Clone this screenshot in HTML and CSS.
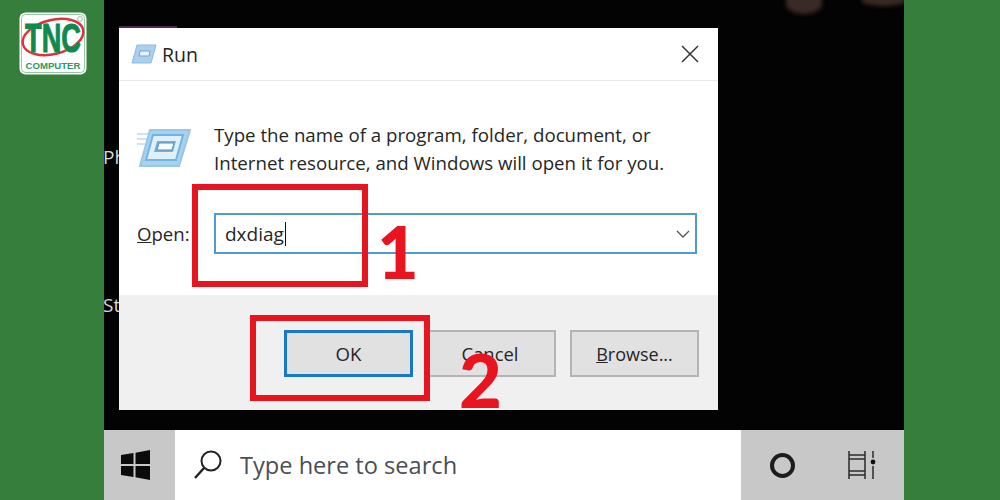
FILE: index.html
```html
<!DOCTYPE html>
<html lang="en">
  <head>
    <meta charset="UTF-8" />
    <title>Run dxdiag</title>
    <link rel="stylesheet" href="styles.css">
  </head>
  <body>
    <div class="logo">
      <svg width="68" height="63" viewBox="0 0 68 63">
        <rect x="0.5" y="0.5" width="67" height="62" rx="6" fill="#fff" />
        <rect x="2.5" y="2.5" width="63" height="58" rx="4" fill="#fff" stroke="#7fb88c" stroke-width="0.8" />
        <ellipse cx="34" cy="25" rx="31" ry="17" transform="rotate(-14 34 25)" fill="none" stroke="#d9343a" stroke-width="2.4" />
        <text class="logo-tnc" transform="translate(34 40) scale(0.68 1)" text-anchor="middle">TNC</text>
        <text class="logo-sub" x="34" y="56.5" text-anchor="middle">COMPUTER</text>
        <circle cx="61" cy="7" r="2.4" fill="none" stroke="#7fb08a" stroke-width="0.8" />
      </svg>
    </div>

    <div class="stage">
      <div class="desktop">
        <div class="tree tree-a"></div>
        <div class="tree tree-b"></div>
        <div class="window-edge"></div>
        <span class="desk-label label-ph">Ph</span>
        <span class="desk-label label-st">St</span>

        <div class="dialog">
          <div class="titlebar">
            <svg class="run-small" width="26" height="20" viewBox="0 0 26 20">
              <path d="M6 1 H25 L20 19 H1 Z" fill="#a9d0ec" stroke="#8dbbdd" />
              <path d="M9 7 H19 L18 12 H8 Z" fill="#e8f3fb" stroke="#6ea5cf" />
            </svg>
            <span class="title">Run</span>
            <svg class="close" width="18" height="18" viewBox="0 0 18 18">
              <path d="M1 1 L17 17 M17 1 L1 17" stroke="#333" stroke-width="1.5" fill="none" />
            </svg>
          </div>

          <div class="content">
            <div class="intro">
              <svg class="run-icon" width="54" height="38" viewBox="0 0 54 38">
                <path d="M0 5 H12 M0 10 H10 M0 15 H8" stroke="#cfe2f0" stroke-width="2" />
                <path d="M13 1 H53 L42 37 H3 Z" fill="#a5d2f0" stroke="#9cc6e4" stroke-width="2" />
                <path d="M16 6 H46 L39 31 H9 Z" fill="#dff0fb" stroke="#74b4e2" stroke-width="2" />
                <path d="M20 12 H39 L36 23 H17 Z" fill="#6fb3e6" />
                <path d="M22 14 H37 L35 21 H20 Z" fill="#f6fbfe" stroke="#6a8ba5" />
              </svg>
              <p class="message">Type the name of a program, folder, document, or<br>Internet resource, and Windows will open it for you.</p>
            </div>
            <div class="open-row">
              <label class="open-label"><u>O</u>pen:</label>
              <div class="combo">
                <span class="combo-value">dxdiag</span><span class="caret"></span>
                <svg class="chevron" width="14" height="8" viewBox="0 0 14 8">
                  <path d="M1 1 L7 7 L13 1" stroke="#555" stroke-width="1.3" fill="none" />
                </svg>
              </div>
            </div>
          </div>

          <div class="actions">
            <button class="btn btn-default">OK</button>
            <button class="btn btn-cancel">Cancel</button>
            <button class="btn btn-browse"><u>B</u>rowse...</button>
          </div>
          <span class="step step-two">2</span>
        </div>

        <div class="mark mark-one"></div>
        <div class="mark mark-two"></div>
        <span class="step step-one">1</span>
      </div>

      <div class="taskbar">
        <div class="start">
          <svg width="29" height="30" viewBox="0 0 29 30">
            <path d="M0 5 L12.5 3 V14 H0 Z M14.5 2.7 L29 0 V14 H14.5 Z M0 16 H12.5 V27 L0 25 Z M14.5 16 H29 V30 L14.5 27.3 Z" fill="#0b0b0b" />
          </svg>
        </div>
        <div class="search">
          <svg width="30" height="32" viewBox="0 0 30 32">
            <circle cx="18" cy="12" r="9.5" fill="none" stroke="#222" stroke-width="2" />
            <path d="M11 19 L2 29" stroke="#222" stroke-width="2.4" fill="none" />
          </svg>
          <span class="search-text">Type here to search</span>
        </div>
        <div class="tray">
          <span class="cortana"></span>
          <svg width="28" height="30" viewBox="0 0 28 30">
            <path d="M1 1 V29 M17 1 V29 M1 5 H17 M1 9 H17 M1 21 H17 M1 25 H17" stroke="#2b2b2b" stroke-width="1.5" fill="none" />
            <path d="M25 1 V8 M25 16 V29" stroke="#2b2b2b" stroke-width="1.5" fill="none" />
            <circle cx="25" cy="12" r="2.4" fill="#111" />
          </svg>
        </div>
      </div>
    </div>
  </body>
</html>
```

FILE: styles.css
```css
body {
  margin: 0;
  width: 1000px;
  height: 500px;
  overflow: hidden;
  background-color: #357e3c;
  font-family: "Open Sans", "Noto Sans", sans-serif;
  color: #262626;
  display: flex;
  justify-content: center;
  position: relative;
}
.logo {
  position: absolute;
  top: 12px;
  left: 19px;
  line-height: 0;
}
.logo-tnc {
  font-family: "Liberation Sans", sans-serif;
  font-size: 40px;
  font-weight: bold;
  fill: #0f8a4c;
  stroke: #0f8a4c;
  stroke-width: 1px;
}
.logo-sub {
  font-family: "Liberation Sans", sans-serif;
  font-size: 9.6px;
  font-weight: bold;
  fill: #2a9a62;
}
.stage {
  width: 800px;
  height: 500px;
  margin-right: -4px;
  margin-left: 4px;
  background-color: #030303;
  display: flex;
  flex-direction: column;
}
.desktop {
  flex: 1;
  position: relative;
  padding: 28px 0 0 15px;
  overflow: hidden;
}
.tree {
  position: absolute;
  top: 0;
  background-color: #3a2a25;
  filter: blur(2px);
  border-radius: 0 0 50% 50%;
}
.tree-a {
  left: 682px;
  top: -6px;
  width: 36px;
  height: 20px;
}
.tree-b {
  left: 758px;
  top: -4px;
  width: 44px;
  height: 10px;
}
.window-edge {
  position: absolute;
  left: 15px;
  top: 26px;
  width: 58px;
  height: 2px;
  background-color: #4a2a50;
}
.desk-label {
  position: absolute;
  left: -1px;
  font-size: 19px;
  color: #d8d8d8;
}
.label-ph {
  top: 144px;
}
.label-st {
  top: 292px;
}
.dialog {
  position: relative;
  width: 599px;
  height: 382px;
  background-color: #fff;
  display: flex;
  flex-direction: column;
  overflow: hidden;
}
.titlebar {
  height: 53px;
  box-sizing: border-box;
  border-bottom: 1px solid #e8e8e8;
  padding: 0 19px 0 12px;
  display: flex;
  align-items: center;
  gap: 5px;
}
.title {
  flex: 1;
  font-size: 19.5px;
}
.content {
  flex: 1;
  padding: 41px 21px 0 18px;
  display: flex;
  flex-direction: column;
}
.intro {
  display: flex;
  gap: 23px;
  align-items: flex-start;
}
.run-icon {
  margin-top: 7px;
}
.message {
  margin: 0;
  font-size: 18.7px;
  line-height: 28px;
  white-space: nowrap;
  margin-top: -1px;
}
.open-row {
  display: flex;
  align-items: center;
  margin-top: 36px;
}
.open-label {
  width: 77px;
  font-size: 18.6px;
}
.combo {
  width: 483px;
  height: 41px;
  box-sizing: border-box;
  border: 2px solid #4f9bd1;
  padding-left: 9px;
  display: flex;
  align-items: center;
  font-size: 19px;
}
.caret {
  width: 1px;
  height: 24px;
  margin-left: 1px;
  background-color: #111;
}
.chevron {
  margin-left: auto;
  margin-right: 5px;
}
.actions {
  height: 115px;
  flex: none;
  box-sizing: border-box;
  background-color: #f0f0f0;
  padding: 35px 19px 0 165px;
  display: flex;
  align-items: flex-start;
  gap: 14px;
}
.btn {
  width: 129px;
  flex: none;
  height: 47px;
  padding: 0;
  border: 2px solid #b4b4b4;
  background-color: #e1e1e1;
  font-family: inherit;
  font-size: 18.6px;
  color: #262626;
}
.btn-default {
  border: 3px solid #1a78c8;
}
.btn-cancel {
  font-size: 18.4px;
  padding-right: 3px;
}
.btn-browse {
  font-size: 18px;
}
.mark {
  position: absolute;
  box-sizing: border-box;
  border: 6px solid #e8141f;
}
.mark-one {
  left: 88px;
  top: 184px;
  width: 176px;
  height: 103px;
}
.mark-two {
  left: 146px;
  top: 315px;
  width: 180px;
  height: 86px;
}
.step {
  position: absolute;
  font-family: "Lato", sans-serif;
  font-weight: 900;
  font-size: 72px;
  line-height: 72px;
  color: #e8141f;
}
.step-one {
  left: 273px;
  top: 215px;
}
.step-two {
  left: 340px;
  top: 315px;
  font-size: 74px;
  line-height: 74px;
}
.taskbar {
  height: 70px;
  flex: none;
  display: flex;
  background-color: #c8c8c8;
}
.start {
  width: 71px;
  box-sizing: border-box;
  padding-left: 17px;
  display: flex;
  align-items: center;
}
.search {
  width: 566px;
  background-color: #fff;
  display: flex;
  align-items: center;
  box-sizing: border-box;
  padding-left: 18px;
  gap: 17px;
}
.search-text {
  font-size: 23.6px;
  color: #4a4f55;
}
.tray {
  flex: 1;
  display: flex;
  align-items: center;
  padding-left: 29px;
  gap: 53px;
}
.cortana {
  width: 25px;
  height: 25px;
  box-sizing: border-box;
  border: 4px solid #1c1c1c;
  border-radius: 50%;
}
```
